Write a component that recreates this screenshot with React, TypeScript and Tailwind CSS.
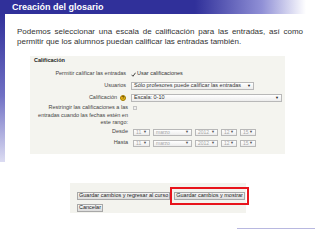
import React from "react";

function Select({ text, width, disabled = false }: { text: string; width: string; disabled?: boolean }) {
  return (
    <div
      className={`${width} flex items-center justify-between border border-[#b8b8b8] bg-linear-to-b from-white to-[#ececec] px-[2px] ${
        disabled ? "h-[7px] text-[#a8a8a8]" : "h-[8px] text-[#333]"
      }`}
    >
      <span className={`${disabled ? "text-[5px]" : "text-[5.5px]"} leading-none whitespace-nowrap`}>{text}</span>
      <span className={`text-[4px] leading-none ${disabled ? "text-[#555]" : "text-[#222]"}`}>▼</span>
    </div>
  );
}

function Button({ children }: { children: React.ReactNode }) {
  return (
    <div className="h-[8px] flex items-center border border-[#a8a8a8] bg-linear-to-b from-[#f6f6f6] to-[#dcdcdc] px-[1px] text-[5.5px] leading-none text-[#222] whitespace-nowrap">
      {children}
    </div>
  );
}

export default function App() {
  const dates = [
    { v: "11", w: "w-[17px]" },
    { v: "marzo", w: "w-[39px]" },
    { v: "2012", w: "w-[23px]" },
    { v: "12", w: "w-[16px]" },
    { v: "15", w: "w-[16px]" },
  ];

  return (
    <div className="w-[320px] h-[240px] overflow-hidden bg-white font-['Liberation_Sans',Arial,sans-serif]">
      {/* Title bar */}
      <div className="h-[14px] flex items-center pl-[12px] bg-[linear-gradient(to_right,#30309a_0,#30309a_195px,#9090d6_262px,#ffffff_306px)]">
        <span className="text-white font-bold text-[9px] leading-none">Creación del glosario</span>
      </div>

      <div className="flex items-start">
        {/* Left strip */}
        <div className="w-[5px] h-[148px] shrink-0 bg-[linear-gradient(to_bottom,#30309a,#7070c4_55%,#dcdcf2)]" />

        <div className="flex-1">
          <p className="ml-[12px] mt-[13px] w-[286px] text-justify text-[8px] leading-[10px] text-[#333]">
            Podemos seleccionar una escala de calificación para las entradas, así como permitir que los alumnos puedan calificar las entradas también.
          </p>

          {/* Grading panel */}
          <div className="ml-[25px] mt-[9px] w-[255px] bg-[#f4f4ef] pt-[1px] pb-[7px]">
            <div className="pl-[4px] h-[7px] flex items-center text-[5.5px] font-bold text-[#222] leading-none">Calificación</div>

            <div className="mt-[6px] flex items-center h-[8px]">
              <div className="w-[96px] text-right text-[5.5px] text-[#444] leading-none whitespace-nowrap">Permitir calificar las entradas</div>
              <div className="ml-[5px] flex items-center gap-[1px] text-[5.5px] text-[#333] leading-none">
                <svg width="5" height="5" viewBox="0 0 10 10">
                  <path d="M1 5.5 L4 8.5 L9 1.5" fill="none" stroke="#333" strokeWidth="1.8" />
                </svg>
                <span>Usar calificaciones</span>
              </div>
            </div>

            <div className="mt-[4px] flex items-center">
              <div className="w-[96px] text-right text-[5.5px] text-[#444] leading-none">Usuarios</div>
              <div className="ml-[5px]">
                <Select text="Sólo profesores puede calificar las entradas" width="w-[123px]" />
              </div>
            </div>

            <div className="mt-[4px] flex items-center">
              <div className="w-[96px] flex items-center justify-end gap-[3px] text-[5.5px] text-[#444] leading-none">
                <span>Calificación</span>
                <span className="w-[6px] h-[6px] rounded-full bg-[#e8b818] border border-[#a07a00] flex items-center justify-center text-[4px] font-bold text-[#332200]">?</span>
              </div>
              <div className="ml-[5px]">
                <Select text="Escala: 0-10" width="w-[151px]" />
              </div>
            </div>

            <div className="mt-[2px] flex items-start">
              <div className="w-[98px] text-right text-[5.5px] leading-[7.5px] text-[#444] whitespace-nowrap">
                Restringir las calificaciones a las
                <br />
                entradas cuando las fechas estén en
                <br />
                este rango:
              </div>
              <div className="ml-[5px] mt-[2px] w-[4px] h-[4px] border border-[#c4c4c4] bg-[#f0f0f0]" />
            </div>

            {["Desde", "Hasta"].map((label, i) => (
              <div key={label} className={`${i === 0 ? "mt-[2px]" : "mt-[4px]"} flex items-center`}>
                <div className="w-[98px] text-right text-[5.5px] text-[#444] leading-none">{label}</div>
                <div className="ml-[5px] flex gap-[3px]">
                  {dates.map((d) => (
                    <Select key={d.v} text={d.v} width={d.w} disabled />
                  ))}
                </div>
              </div>
            ))}
          </div>

          {/* Buttons panel */}
          <div className="ml-[65px] mt-[29px] w-[176px] bg-[#f3f3ee] pl-[7px] pt-[4px] pb-[1px]">
            <div className="flex items-center">
              <Button>Guardar cambios y regresar al curso</Button>
              <div className="border-2 border-[#e8141c] px-[2px] py-[3px]">
                <Button>Guardar cambios y mostrar</Button>
              </div>
            </div>
            <div className="-mt-[1px] flex">
              <Button>Cancelar</Button>
            </div>
          </div>

          <div className="ml-[232px] mt-[15px] w-[78px] h-px bg-[#b8b8e0]" />
        </div>
      </div>
    </div>
  );
}
